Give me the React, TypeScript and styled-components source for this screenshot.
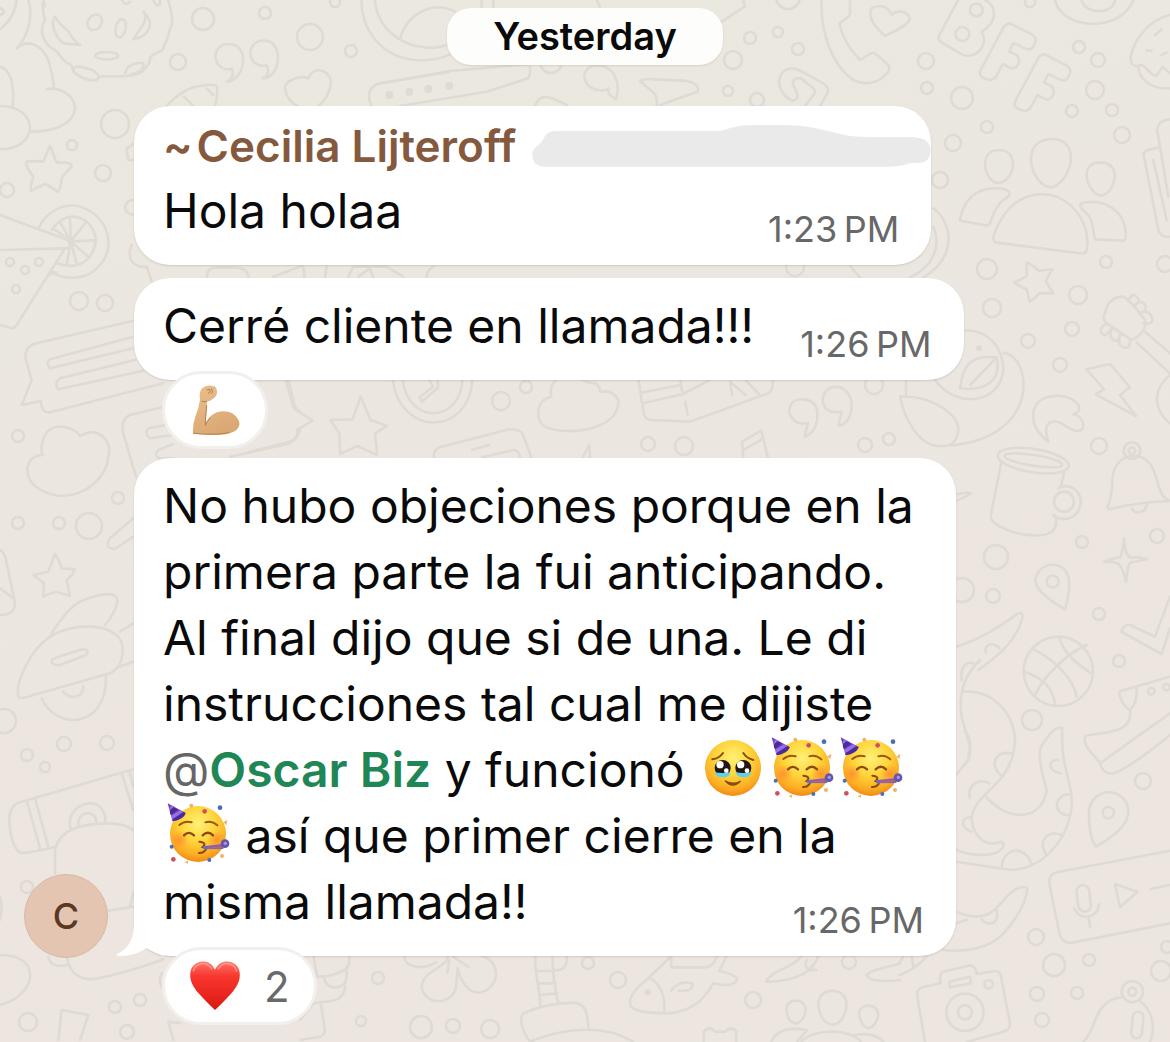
import React from "react";
import styled, { createGlobalStyle } from "styled-components";

const GlobalStyle = createGlobalStyle`
  *, *::before, *::after { box-sizing: border-box; }
  body {
    margin: 0;
    background: #ece6df;
    font-family: Inter, Roboto, "Liberation Sans", sans-serif;
    color: #0a0a0a;
  }
`;

const Screen = styled.main`
  position: relative;
  min-height: 100vh;
  overflow: hidden;
  padding: 8px 24px 15px;
  background: linear-gradient(168deg, #ebe8e0 0%, #ebe7e0 45%, #ede5df 65%, #ede6e0 100%);
`;

const Wallpaper = styled.svg`
  position: absolute;
  inset: 0;
  width: 100%;
  height: 100%;
  fill: none;
  stroke: #dfdad3;
  stroke-width: 2.6px;
  stroke-linecap: round;
  stroke-linejoin: round;

  path, ellipse, circle, rect { vector-effect: non-scaling-stroke; }
`;

const Thread = styled.div`
  position: relative;
  display: flex;
  flex-direction: column;
`;

const DateChip = styled.time`
  align-self: center;
  padding: 0 46px;
  margin-bottom: 41px;
  border-radius: 24px;
  background: #fdfdfc;
  box-shadow: 0 1px 2px rgba(60, 50, 40, 0.12);
  font-size: 38px;
  font-weight: 600;
  line-height: 57px;
`;

const Row = styled.article<{ $gap?: number }>`
  display: grid;
  grid-template-columns: 84px minmax(0, 1fr);
  column-gap: 26px;
  margin-bottom: ${(p) => p.$gap ?? 0}px;
`;

const Avatar = styled.div`
  grid-column: 1;
  align-self: end;
  display: grid;
  place-items: center;
  height: 84px;
  margin-bottom: -2px;
  border: 1px solid #d9b9a5;
  border-radius: 50%;
  background: #e4c5b1;
  color: #5a3823;
  font-size: 36px;
  font-weight: 500;
`;

const Bubble = styled.div<{ $maxWidth?: number }>`
  position: relative;
  grid-column: 2;
  justify-self: start;
  max-width: ${(p) => p.$maxWidth ?? 832}px;
  padding: 15px 32px 21px 29px;
  border-radius: 36px;
  background: #fff;
  box-shadow: 0 1px 2px rgba(60, 50, 40, 0.16);
`;

const Sender = styled.header`
  display: flex;
  align-items: center;
  gap: 4px;
  height: 50px;
  margin-bottom: 7px;
  color: #84593e;
  font-size: 44px;
  font-weight: 600;
  white-space: nowrap;
`;

const Smudge = styled.svg`
  flex: none;
  width: 399px;
  height: 44px;
  margin: 0 -32px 0 12px;
  fill: #eaeaea;
`;

const Text = styled.p`
  margin: 0;
  font-size: 48px;
  line-height: 66px;
`;

const Mention = styled.a`
  color: #1f8656;
  font-weight: 600;
  text-decoration: none;
`;

const At = styled.span`
  color: #666;
  font-weight: 400;
`;

const Stamp = styled.time`
  float: right;
  margin: 36px 0 0 46px;
  color: #686868;
  font-size: 36px;
  line-height: 30px;
`;

const Tail = styled.svg`
  position: absolute;
  left: -18px;
  bottom: 0;
  width: 48px;
  height: 60px;
  fill: #fff;
`;

const Emoji = styled.svg`
  width: 69px;
  height: 64px;
  margin-top: -8px;
  vertical-align: -11px;
`;

const Reaction = styled.button`
  position: relative;
  grid-column: 2;
  justify-self: start;
  display: flex;
  align-items: center;
  gap: 23px;
  height: 78px;
  margin: -9px 0 0 28px;
  padding: 0 24px;
  border: 3px solid #f2f0ec;
  border-radius: 39px;
  background: #fff;
  color: #6a6a6a;
  font: 400 42px Inter, Roboto, "Liberation Sans", sans-serif;
`;

const ReactionArt = styled.svg`
  width: 52px;
  height: 56px;
`;

const dots: number[][] = [
  [203, 19, 11], [265, 13, 6], [310, 37, 13], [351, 51, 6], [178, 62, 8], [115, 124, 14], [72, 145, 5],
  [103, 173, 8], [7, 190, 7], [79, 301, 9], [105, 303, 8], [335, 2, 5], [10, 262, 4], [25, 270, 4],
  [39, 262, 4], [16, 289, 4], [750, 38, 6], [778, 32, 5], [733, 60, 9], [798, 49, 6], [728, 91, 5],
  [757, 100, 7], [788, -3, 12], [926, 61, 8], [927, 88, 6], [962, 98, 11], [1030, 2, 5], [1079, 47, 6],
  [1098, 60, 7], [1095, 90, 9], [1072, 111, 6], [1112, 110, 6], [1122, 135, 8], [987, 127, 6],
  [953, 143, 8], [940, 180, 8], [987, 269, 10], [1106, 262, 6], [1165, 264, 8], [992, 308, 9],
  [1078, 295, 9], [1072, 329, 7], [1028, 341, 7], [795, 267, 9], [1060, 365, 7], [1099, 446, 8],
  [1082, 542, 6], [1157, 536, 7], [996, 557, 12], [962, 590, 12], [993, 596, 7], [1099, 614, 6],
  [1119, 661, 6], [1032, 720, 10], [1143, 781, 8], [1036, 937, 8], [1054, 965, 11], [1089, 960, 6],
  [1037, 994, 7], [1077, 993, 6], [1042, 1020, 7], [1161, 971, 10], [1167, 947, 6], [18, 436, 6],
  [118, 498, 6], [18, 523, 6], [59, 523, 6], [89, 526, 13], [4, 721, 12], [64, 744, 7], [107, 743, 7],
  [27, 755, 6], [45, 767, 5], [27, 887, 6], [28, 1022, 9], [115, 1007, 6], [140, 1000, 6],
  [127, 1032, 7], [501, 401, 9], [526, 387, 6], [648, 444, 7], [684, 446, 9], [865, 445, 7],
  [889, 439, 6], [874, 385, 9], [378, 978, 6], [361, 1021, 5], [421, 1027, 11], [453, 1026, 7],
  [490, 1029, 9], [588, 963, 6], [618, 980, 8], [753, 1000, 8], [849, 962, 7], [551, 62, 11],
];

const Doodles = () => (
  <Wallpaper viewBox="0 0 1170 1042" preserveAspectRatio="xMidYMin slice" aria-hidden="true">
    {dots.map(([x, y, r]) => (
      <circle key={`${x}-${y}`} cx={x} cy={y} r={r} />
    ))}

    {/* cookie, clouds, quotes, heart, star, citrus slice, pizza */}
    <g transform="scale(.33333)">
      <path d="M130 0C125 30 130 45 135 60C115 90 130 125 155 145C175 150 180 175 200 188C225 195 210 205 225 220C250 235 270 245 290 240L298 230C330 225 355 235 400 225C430 222 435 205 450 185C440 160 500 155 490 140C510 110 505 90 515 75C520 40 510 25 505 0" />
      <path d="M165 50C150 70 165 110 190 130L240 135C215 120 215 105 200 88C180 75 175 65 165 50M430 35C445 55 430 75 415 95L400 118C440 110 450 90 450 65C445 50 440 45 430 35M225 220C210 200 230 195 260 205C285 210 300 225 295 235M375 220C380 195 410 185 430 190C435 205 415 220 395 222M365 0Q375 20 390 5M460 0Q465 20 480 15V0" />
      <ellipse cx="284" cy="67" rx="20" ry="25" transform="rotate(35 284 67)" />
      <ellipse cx="362" cy="85" rx="15" ry="28" transform="rotate(12 362 85)" />
      <ellipse cx="320" cy="167" rx="34" ry="11" />
      <path d="M50 0C45 40 30 65 0 88M0 25C15 30 15 40 0 45M85 0C95 30 95 100 50 145C90 110 130 145 145 180C155 215 160 235 162 265M130 0L135 18M140 267C185 260 225 290 225 325C220 375 160 395 92 395M0 200C30 205 45 255 38 315M0 318C55 318 90 345 90 385C85 430 40 450 0 447" />
      <path d="M688 132a38 38 0 1 0 8 74Q705 235 680 245C705 245 735 215 728 165Q718 132 688 132ZM795 122a38 38 0 1 0 5 74Q812 225 788 235C815 235 840 205 832 155Q822 122 795 122Z" />
      <path d="M925 235C900 225 855 240 855 265C858 305 900 325 930 335C970 315 990 280 993 245C992 210 940 195 925 235Z" />
      <path d="M500 318C530 285 555 270 580 262C610 255 640 252 650 258C655 270 650 295 645 318M552 290L580 318M620 265L640 285M1115 318C1100 290 1105 260 1140 250L1350 215" />
      <path d="M150 438C160 455 160 470 170 487C190 490 205 482 215 498C205 515 190 520 185 535Q185 555 175 575C160 570 150 555 135 552Q115 560 93 573C90 555 95 545 100 530C90 515 75 500 80 485Q105 482 130 485Q140 460 150 438Z" />
      <path d="M115 685C140 630 205 600 255 625C330 660 345 745 300 795C260 845 190 840 155 815M155 690C185 645 225 640 260 665C300 700 290 745 265 775C235 805 200 800 172 790M212 725L210 655M212 725L255 670M212 725L285 720M212 725L265 770M212 725L230 790M212 725L200 795M212 725L160 685M212 725L180 665" />
      <path d="M0 645L190 715C210 720 220 745 195 745L50 975Q45 985 35 985L0 975M0 750L195 745M150 825C155 815 165 815 170 820" />
      <path d="M380 445Q395 440 400 430M380 450L385 480H400M400 600C375 600 360 635 400 645M395 735C380 770 395 805 440 800L455 845M620 830C625 800 640 800 670 803C720 800 745 805 745 832M820 830L905 798Q915 805 912 832M980 798L975 832M1045 830L1060 800H1160L1210 830M1075 830L1110 805L1120 832M1280 832Q1280 810 1300 800" />
    </g>

    {/* watch, remote, comma, pennant near the date */}
    <g transform="translate(300 0) scale(.33333)">
      <path d="M185 0C180 80 245 190 380 180C430 178 470 160 505 120M225 0C230 80 300 145 400 143Q440 140 465 125M300 118C320 40 400 0 465 35M545 0V20M580 0V20" />
      <path d="M245 250L450 213L690 192Q692 225 685 235L560 275L300 318M705 318C720 280 740 285 800 315" />
      <path d="M915 200C865 185 840 220 860 250C880 280 920 270 925 265Q920 285 948 297C960 260 950 215 915 200ZM1020 243Q1035 235 1060 238L1150 242C1185 245 1200 260 1192 275L1080 315M1020 243C1060 280 1075 280 1070 318M1330 0L1335 20C1300 40 1290 50 1265 65M890 0L900 20" />
      <g fill="#dfdad3"><circle cx="268" cy="285" r="8" /><circle cx="328" cy="275" r="8" /><circle cx="385" cy="267" r="8" /><circle cx="448" cy="258" r="8" /></g>
    </g>

    {/* phone, BFF letters, people, star, guitar head */}
    <g transform="translate(720 0) scale(.33333)">
      <path d="M305 0C300 100 340 200 400 240C430 255 475 255 505 215Q512 205 505 195L465 160Q455 155 445 165L420 180C385 145 365 105 358 70L385 50Q392 45 390 35V0M455 25C480 10 505 20 515 45C535 25 565 35 570 58C560 80 520 95 495 108C470 85 440 55 455 25Z" />
      <path d="M255 318L280 285Q290 275 280 265L255 245C245 230 220 230 218 250C225 270 245 295 220 302C190 295 170 255 180 230C190 205 215 200 240 212L310 250Q330 265 322 280L300 318" />
      <path d="M715 0L658 105Q650 120 670 130L720 160C760 185 810 140 785 95C840 60 825 15 795 0" />
      <circle cx="769" cy="30" r="19" /><circle cx="727" cy="102" r="21" />
      <path id="bff-f" d="M870 70L935 103Q955 115 942 135C935 155 920 150 895 135L880 130L868 155L890 165Q905 180 890 200C875 212 865 200 848 192L828 230Q815 245 798 237C775 228 775 220 790 195L850 83Q858 70 870 70Z" />
      <use href="#bff-f" transform="translate(104 93)" />
      <path d="M1005 0C1025 90 1200 100 1240 0M1085 0C1095 45 1180 45 1185 0M1350 45C1290 60 1245 110 1232 170Q1230 200 1255 198C1275 185 1285 225 1310 228L1328 200L1350 220M1255 198C1255 240 1300 270 1350 265M1305 105L1325 88M1280 152H1295M1325 165L1340 158" />
      <path d="M835 450C885 450 885 500 870 525C845 560 820 555 803 525C785 485 800 450 835 450ZM990 417C1060 415 1065 480 1035 530C1000 580 970 565 945 525C920 470 935 420 990 417ZM1142 487C1195 490 1190 540 1170 570C1145 600 1125 585 1110 560C1090 520 1100 487 1142 487Z" />
      <path d="M720 660C730 600 770 560 835 565Q880 570 865 590C830 610 820 640 810 670Q805 680 790 675L725 663ZM830 728C810 725 825 690 840 665C880 590 950 570 1010 590C1080 620 1110 690 1100 750Q1098 762 1080 760ZM1085 610C1140 595 1200 620 1215 680Q1222 722 1210 722L1125 718C1118 690 1120 665 1105 645Q1070 615 1085 610Z" />
      <path d="M920 787Q945 800 955 812Q980 810 998 808Q982 830 978 845Q990 865 1000 880Q975 880 958 880Q945 895 928 905Q925 885 920 868Q900 860 882 848Q905 838 920 828Q920 810 920 787Z" />
      <path d="M1350 358C1315 360 1305 385 1315 410L1345 590M1270 460C1280 445 1300 450 1315 442M1270 460L1315 690Q1325 715 1350 710M1300 480L1340 660M640 625C710 680 700 780 610 832M640 680C665 740 640 800 570 832M390 798L420 832" />
      <path d="M1155 940Q1165 890 1210 890Q1235 905 1275 960Q1280 1000 1235 1020L1160 970Q1145 955 1155 940ZM1225 905Q1235 875 1250 890T1240 920Q1265 895 1275 915T1255 940Q1285 925 1295 950T1270 970M1160 970Q1135 985 1145 1000T1175 985Q1165 1010 1180 1020T1200 1005Q1190 1035 1210 1042T1230 1020" />
    </g>

    {/* avocado, bolt, mug, bell, pin, sparkle */}
    <g transform="translate(900 300) scale(.33333)">
      <path d="M190 92C260 85 310 140 310 210C300 310 170 330 105 240M312 158C350 165 375 210 370 275C350 390 240 435 120 438C50 440 10 340 0 290C90 285 175 340 175 390Q170 425 150 435M180 265C190 190 215 165 290 172C305 240 260 275 180 265ZM210 255L285 178" />
      <circle cx="237" cy="145" r="5" fill="#dfdad3" />
      <path d="M560 208L630 192L690 262L660 285L708 348L587 283L612 268ZM710 128L810 220M735 95L810 160M810 225C755 270 760 330 810 370" />
      <path d="M445 425C385 380 385 310 440 292C500 275 550 310 535 335L520 343C550 350 555 375 545 390C510 405 485 350 450 368Q430 380 445 425Z" />
      <ellipse cx="400" cy="482" rx="108" ry="35" transform="rotate(9 400 482)" />
      <ellipse cx="400" cy="481" rx="88" ry="16" transform="rotate(9 400 481)" />
      <path d="M303 490C295 540 280 600 272 650C280 690 400 720 445 700Q475 690 467 650M492 520L482 560" />
      <path d="M475 565C510 545 545 575 542 610C535 655 490 670 460 645" /><circle cx="492" cy="605" r="30" />
      <path d="M622 620Q635 600 637 540C640 490 670 465 710 468C770 475 765 550 790 590L810 603Q720 605 628 628ZM695 625C705 645 735 640 740 615" />
      <circle cx="696" cy="452" r="25" /><circle cx="696" cy="452" r="10" />
      <path d="M672 715Q675 765 690 772Q715 770 740 778Q710 785 690 788Q682 800 678 845Q668 800 655 792Q635 782 612 785Q645 775 660 772Q668 755 672 715Z" />
      <path d="M495 928C455 905 400 870 407 835C420 780 500 780 507 840Q510 880 495 928Z" /><circle cx="458" cy="845" r="18" />
      <path d="M168 583Q200 575 213 580Q200 590 168 603M168 1040C260 1010 310 970 355 940Q370 935 367 955C345 1030 290 1070 235 1110M258 1058C250 1030 285 1025 298 1045M18 240V290" />
      <path d="M810 890L765 1010L690 975Q675 970 663 995L785 1062L810 985" />
    </g>

    {/* basketball, tentacles, sneaker, pin, voice note, camera, bell */}
    <g transform="translate(900 660) scale(.33333)">
      <circle cx="475" cy="34" r="104" />
      <path d="M395 -35C450 -10 520 50 530 110M478 -68C490 -20 530 10 570 38M560 -45C500 -20 430 50 405 105M373 35C420 50 460 80 465 135" />
      <path d="M190 95C280 90 345 160 345 250C330 390 220 390 215 480C225 545 265 560 305 545Q320 560 290 578C250 590 200 585 168 568M240 0C190 50 175 100 185 170C200 235 220 260 205 300L168 345M185 60C180 20 200 0 225 12M255 408C340 500 430 470 440 390C420 320 410 270 430 250Q465 195 487 205C480 330 520 360 515 440C500 560 400 650 300 625L168 605M302 345C270 320 280 270 337 280M210 415C200 370 240 355 268 370M215 515C180 505 180 470 215 472M482 340C440 335 445 295 475 300M510 465C460 470 455 405 510 402M440 585C410 540 445 510 485 525M305 620C310 560 375 555 395 612M205 290Q220 240 195 215" />
      <path d="M168 755C250 790 280 760 320 710Q360 670 382 685C380 740 320 820 280 845Q220 880 128 870M245 778C260 800 300 795 290 750M168 790L200 780M0 945Q50 925 80 890M35 890L40 920M0 905L10 890" />
      <path d="M810 50L665 92Q655 95 660 110Q670 140 690 150C710 130 710 110 710 85M690 150C700 220 620 215 555 228C545 260 590 290 600 310Q610 345 640 340Q680 330 810 225M600 310L810 160" />
      <circle cx="754" cy="94" r="10" /><circle cx="800" cy="82" r="10" />
      <path d="M588 560Q565 530 567 450C580 380 670 380 685 445C690 500 630 535 588 560Z" /><circle cx="625" cy="458" r="17" />
      <path d="M810 572L470 637Q445 645 448 670L478 820Q485 850 515 848L810 790M645 672L712 695L660 742ZM752 687L810 675" />
      <rect x="532" y="675" width="38" height="80" rx="19" transform="rotate(-7 551 715)" />
      <path d="M522 745C540 785 595 775 597 733M565 770L570 800" />
      <path d="M75 1146L52 1010Q48 990 65 982L122 970Q115 940 130 935L205 917Q225 912 230 942L285 933Q300 933 303 950L330 1090Q330 1110 310 1115L200 1146M148 965L210 950L213 970L150 982Z" />
      <circle cx="195" cy="1057" r="56" /><circle cx="195" cy="1057" r="21" /><circle cx="266" cy="973" r="13" />
      <path d="M550 1146C590 1110 580 1020 665 1012M715 1020C755 1045 770 1100 750 1146" />
      <circle cx="697" cy="995" r="32" /><circle cx="697" cy="995" r="12" />
      <rect x="696" y="1055" width="32" height="80" rx="16" transform="rotate(5 712 1095)" />
    </g>

    {/* chat cards, cloud and star at the left edge */}
    <g transform="translate(0 300) scale(.33333)">
      <path d="M400 62L110 130Q70 140 78 180L95 240L65 315L122 303Q125 340 150 337L490 250M400 110L150 178Q135 190 150 205L400 145M405 180L180 235Q160 250 175 268L430 212M500 318L390 345Q360 360 370 400L408 530M500 375L445 385Q430 400 450 415L520 405M520 432L475 450Q460 465 478 475H520" />
      <path d="M125 465C120 400 150 375 190 380Q225 385 240 408C290 375 340 420 325 470C320 530 260 590 180 588C120 580 80 550 82 505Q90 465 130 465Z" />
      <path d="M165 762Q180 785 185 805L225 808Q215 830 200 840L210 887Q180 880 168 875Q150 880 130 890L132 850L100 825L145 815ZM400 655L330 715Q310 745 345 747L400 710M865 240L880 300Q885 330 900 335M900 385Q895 425 850 435L690 470M0 750Q15 755 20 790L42 895" />
    </g>

    {/* rocket, camera, lamp */}
    <g transform="translate(0 560) scale(.33333)">
      <path d="M42 115Q55 165 0 165M0 85L40 115M55 410C45 370 90 270 150 230C230 180 365 190 368 265Q370 320 330 340L100 405Q60 420 55 410ZM155 220C180 180 205 145 240 125C310 95 355 95 352 125Q345 160 315 195M360 215L400 190M360 320L400 305M125 415C165 510 320 510 318 350M190 395C210 420 250 415 250 378M155 300Q165 292 250 267Q270 270 258 285L180 315Q155 318 155 300Z" />
      <path d="M400 628L50 730Q25 745 28 790Q35 860 60 878Q90 880 165 860M80 722L120 865M105 715L145 860M365 640L400 750M388 632L400 680" />
      <path d="M165 940V870C180 800 260 790 330 790Q370 790 400 810M212 805C195 750 265 710 300 740Q320 765 315 785M235 795C230 755 285 745 290 785M325 1052L400 1040M400 1000L390 1040M145 1190C150 1220 180 1220 200 1215M200 1190C210 1250 250 1260 280 1257Q360 1245 490 1198M485 1240C475 1260 480 1275 490 1285M0 1185C60 1185 95 1210 90 1255C80 1300 40 1325 0 1335M0 1010Q10 1040 0 1080M175 1440L185 1350L265 1365L240 1440M540 1390L505 1385L520 1440" />
    </g>

    {/* strip between second and third message */}
    <g transform="translate(250 370) scale(.44643 .33333)">
      <path d="M80 30L98 115L140 152L105 180Q110 210 80 218L0 245M248 80L270 150L307 168L280 190L285 255L240 228L202 252L200 190L180 150L230 148ZM320 30C335 200 490 200 498 30M342 30C355 165 470 160 476 30M402 32L410 50L380 82L385 95L422 52L420 32M412 262Q410 235 430 230L580 178Q605 175 612 195L630 262M497 240L535 225M520 262L590 240Q602 240 605 262M745 262L760 225L762 262M685 30Q670 50 675 80C640 90 640 140 655 165C690 200 830 190 825 90Q815 60 785 65Q780 35 765 40L745 30" />
      <path d="M870 30L882 130Q885 150 900 150L985 155L1150 75Q1175 70 1170 30M875 68L965 45V30M880 100L970 72L1030 30M965 45L970 72M975 95L980 135M1080 75L1075 35L1110 75M1110 30L1140 72M1105 262L1102 215L1145 182L1160 262M1105 240L1150 205" />
      <path d="M1240 88C1210 85 1200 120 1215 145Q1225 165 1250 160L1242 200C1270 190 1275 140 1268 110Q1260 90 1240 88ZM1315 50C1285 50 1275 90 1290 115Q1300 130 1325 125L1318 168C1350 160 1352 100 1342 75Q1330 52 1315 50Z" />
    </g>

    {/* bottom edge: clover, fish, candle, people */}
    <g transform="translate(300 940) scale(.3827 .33333)">
      <path d="M35 48L45 110Q75 110 95 100Q135 90 128 50M62 112Q70 145 95 142Q125 140 122 95M118 140Q115 175 85 182L35 190L0 240M55 195L65 270Q65 290 45 292L0 300M272 48C275 85 320 90 355 68M385 50C390 80 320 90 318 140C325 200 400 195 408 140L412 85C420 125 440 160 470 158C530 140 520 60 475 48M385 98L390 60M400 50L440 80" />
      <path d="M615 48C612 100 628 150 628 200M660 48Q660 120 675 190M618 93H665M622 130H668M625 165L672 160M665 90Q700 95 697 48M600 305C580 270 570 235 585 220Q640 190 715 188Q745 190 750 230L755 268M600 305C700 260 800 255 870 305M970 48L910 115Q850 170 865 200Q880 220 960 220C1030 215 1060 170 1080 130Q1140 145 1142 115Q1130 100 1095 93L1115 48M915 115Q955 140 952 218M970 48V82H1060Q1080 80 1090 48M970 152Q990 120 1025 130Q1030 155 990 152M1218 125C1230 90 1290 85 1310 48M1218 125Q1330 125 1355 48M1325 60Q1310 90 1350 90M1480 105C1500 85 1530 85 1568 70M1480 105Q1490 130 1568 120" />
      <circle cx="909" cy="157" r="5" fill="#dfdad3" />
      <path d="M1295 182C1325 182 1325 215 1315 235Q1295 265 1278 238C1265 210 1270 182 1295 182ZM1390 152C1435 155 1435 200 1415 240Q1390 270 1365 235C1345 190 1355 155 1390 152ZM1487 197C1515 200 1515 230 1503 250Q1485 280 1468 248C1455 220 1460 197 1487 197ZM1232 305Q1250 255 1325 270L1300 305M1310 305C1340 265 1440 265 1465 305M1450 285Q1500 275 1525 305M1055 305V275Q1070 255 1085 275H1110Q1130 255 1140 275V305" />
    </g>
  </Wallpaper>
);

const Defs = () => (
  <svg width="0" height="0" style={{ position: "absolute" }} aria-hidden="true">
    <defs>
      <radialGradient id="face" cx=".5" cy=".32" r=".7">
        <stop offset="0" stopColor="#fff176" />
        <stop offset=".45" stopColor="#fed53b" />
        <stop offset=".8" stopColor="#fbab22" />
        <stop offset="1" stopColor="#ee8416" />
      </radialGradient>
      <radialGradient id="blush">
        <stop offset="0" stopColor="#ff7d2e" stopOpacity=".65" />
        <stop offset="1" stopColor="#ff7d2e" stopOpacity="0" />
      </radialGradient>
      <linearGradient id="skin" x1="0" y1="0" x2=".4" y2="1">
        <stop offset="0" stopColor="#e9bd8c" />
        <stop offset=".6" stopColor="#e2b27e" />
        <stop offset="1" stopColor="#d9a875" />
      </linearGradient>
      <linearGradient id="heart" x1="0" y1="0" x2="0" y2="1">
        <stop offset="0" stopColor="#ff7468" />
        <stop offset=".3" stopColor="#f8372f" />
        <stop offset="1" stopColor="#dc1712" />
      </linearGradient>
    </defs>
  </svg>
);

const TearyFace = () => (
  <Emoji viewBox="24 15 207 192" role="img" aria-label="face holding back tears">
    <circle cx="129" cy="117" r="84" fill="url(#face)" />
    <path d="M67 91Q88 88 99 72M160 72Q170 88 190 93" fill="none" stroke="#8a4a10" strokeWidth="6" strokeLinecap="round" />
    <circle cx="98" cy="117" r="24" fill="#231510" />
    <circle cx="160" cy="117" r="24" fill="#231510" />
    <path d="M74 130Q98 134 121 130Q120 145 99 145Q77 145 74 130ZM137 130Q160 134 184 130Q181 145 160 145Q140 145 137 130Z" fill="#5fd0ee" />
    <g fill="#fff">
      <circle cx="90" cy="107" r="11" /><circle cx="152" cy="107" r="11" />
      <circle cx="109" cy="125" r="7" /><circle cx="171" cy="125" r="7" />
    </g>
    <path d="M106 156Q128 180 151 157Q128 169 106 156Z" fill="#8a4a10" stroke="#8a4a10" strokeWidth="4" strokeLinejoin="round" />
  </Emoji>
);

const PartyFace = () => (
  <Emoji viewBox="231 15 207 192" role="img" aria-label="partying face">
    <circle cx="336" cy="117" r="84" fill="url(#face)" />
    <circle cx="280" cy="134" r="28" fill="url(#blush)" />
    <circle cx="392" cy="134" r="28" fill="url(#blush)" />
    <path d="M245 25L299 54Q292 74 260 79Z" fill="#6b3fc4" />
    <path d="M255 31L250 44L271 37ZM282 46L255 62L258 75L297 55Z" fill="#a583ee" opacity=".75" />
    <path d="M262 36L251 49L254 60L276 44ZM292 51L259 73L260 79Q292 74 299 55Z" fill="#4b2a9c" />
    <path d="M280 90Q296 76 317 82M358 82Q378 76 394 91" fill="none" stroke="#9a5714" strokeWidth="6" strokeLinecap="round" />
    <path d="M294 121Q308 106 324 121M350 121Q366 106 381 121" fill="none" stroke="#8a4a10" strokeWidth="7" strokeLinecap="round" />
    <path d="M340 140Q364 143 350 156Q366 160 356 168Q350 175 339 174" fill="none" stroke="#8a4a10" strokeWidth="6" strokeLinecap="round" />
    <path d="M350 154L412 147V162L352 163Z" fill="#7468bd" />
    <path d="M366 159L412 156" stroke="#cf5777" strokeWidth="4" />
    <circle cx="417" cy="146" r="13" fill="#6555ad" />
    <circle cx="418" cy="145" r="5" fill="#a79be0" />
    <g fill="#4a6db8">
      <circle cx="402" cy="38" r="7" /><circle cx="257" cy="155" r="6" /><circle cx="370" cy="195" r="6" />
    </g>
    <g fill="#d34d62">
      <circle cx="356" cy="49" r="7" /><circle cx="262" cy="193" r="7" />
    </g>
    <g fill="#f2b066">
      <circle cx="316" cy="32" r="6" /><circle cx="408" cy="183" r="6" /><path d="M412 82L424 75L421 91ZM296 202L306 197V206Z" />
    </g>
  </Emoji>
);

const Biceps = () => (
  <ReactionArt viewBox="120 33 156 168" role="img" aria-label="flexed biceps">
    <path d="M132 188Q130 160 139 137Q150 110 153 86Q149 62 160 51Q171 41 188 44Q203 45 203 57Q207 72 194 82Q185 91 174 91Q172 126 169 162Q182 123 223 121Q256 121 269 148Q278 170 252 183Q225 195 182 191Q155 190 132 188Z" fill="url(#skin)" />
    <path d="M174 91Q170 95 159 91M169 162Q169 145 173 104M174 57L181 55L184 62L178 67M187 53Q195 61 188 67M169 162Q174 150 183 141" fill="none" stroke="#b57c49" strokeWidth="3" strokeLinecap="round" />
    <path d="M134 187Q195 194 240 185" fill="none" stroke="#b9814d" strokeWidth="3" strokeLinecap="round" />
  </ReactionArt>
);

const Heart = () => (
  <ReactionArt viewBox="118 508 156 168" role="img" aria-label="red heart">
    <path d="M196 664Q174 644 146 613C126 590 120 572 122 552C126 518 176 502 196 543C216 502 267 518 270 552C272 572 266 590 246 613Q218 644 196 664Z" fill="url(#heart)" />
    <path d="M131 546C138 522 170 516 186 540M206 540C222 516 254 522 261 546" fill="none" stroke="#ffb0a6" strokeWidth="6" strokeLinecap="round" opacity=".55" />
  </ReactionArt>
);

export default function App() {
  return (
    <Screen>
      <GlobalStyle />
      <Defs />
      <Doodles />
      <Thread>
        <DateChip>Yesterday</DateChip>

        <Row $gap={13}>
          <Bubble>
            <Sender>
              <span>~</span>
              <span>Cecilia Lijteroff</span>
              <Smudge viewBox="696 366 1197 132" aria-hidden="true">
                <path d="M697 458C697 434 722 430 728 415Q738 387 768 387H1262C1290 378 1320 369 1360 369H1455C1560 369 1610 405 1700 405H1840Q1890 408 1892 445Q1890 483 1855 483H1835C1820 485 1805 494 1770 494H735Q697 492 697 458Z" />
              </Smudge>
            </Sender>
            <Text>
              Hola holaa <Stamp>1:23{"\u202f"}PM</Stamp>
            </Text>
          </Bubble>
        </Row>

        <Row $gap={9}>
          <Bubble>
            <Text>
              Cerré cliente en llamada!!! <Stamp>1:26{"\u202f"}PM</Stamp>
            </Text>
          </Bubble>
          <Reaction type="button" aria-label="1 reaction">
            <Biceps />
          </Reaction>
        </Row>

        <Row>
          <Avatar>C</Avatar>
          <Bubble $maxWidth={822}>
            <Tail viewBox="0 0 48 60" aria-hidden="true">
              <path d="M18 0V28C18 42 13 53 1 58Q0 60 3 60C14 60 24 57 30 52L48 60V0Z" />
            </Tail>
            <Text>
              No hubo objeciones porque en la primera parte la fui anticipando. Al final dijo que si de una. Le di
              instrucciones tal cual me dijiste{" "}
              <Mention href="#oscar-biz">
                <At>@</At>Oscar Biz
              </Mention>{" "}
              y funcionó <TearyFace />
              <PartyFace />
              <PartyFace />
              <PartyFace /> así que primer cierre en la misma llamada!! <Stamp>1:26{"\u202f"}PM</Stamp>
            </Text>
          </Bubble>
          <Reaction type="button" aria-label="2 heart reactions">
            <Heart />
            <span>2</span>
          </Reaction>
        </Row>
      </Thread>
    </Screen>
  );
}
